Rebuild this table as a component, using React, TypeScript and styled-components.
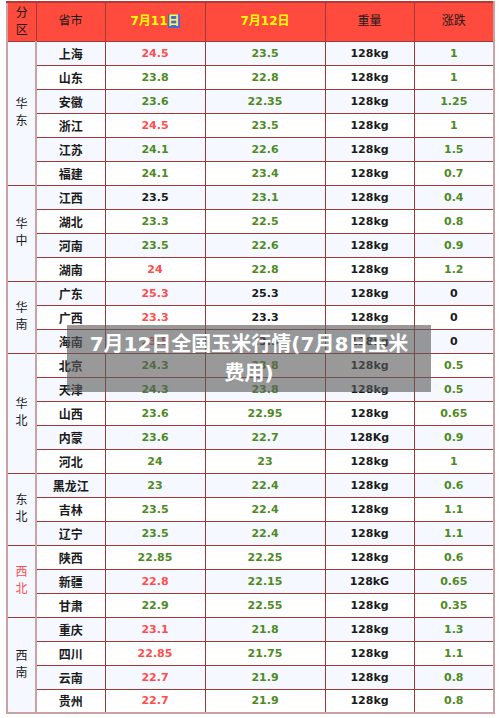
import styled, { createGlobalStyle } from 'styled-components'

const GlobalStyle = createGlobalStyle`
  body {
    margin: 0;
    background: #ffffff;
    font-family: "DejaVu Sans", "Noto Sans CJK SC", sans-serif;
  }
`

const Page = styled.div`
  position: relative;
  padding: 1px 7px 0 6px;
`

const Table = styled.table`
  width: 487px;
  table-layout: fixed;
  border-collapse: collapse;
  border: 2px solid #c9a3a3;
  border-top: 2px solid #b23a33;
  font-size: 11px;
`

const HeadRow = styled.tr`
  height: 39px;
  background: #ff4b3e;
`

const HeadCell = styled.th<{ $yellow?: boolean }>`
  padding: 0;
  border: 1px solid #9c3a36;
  font-size: 12px;
  font-weight: ${p => (p.$yellow ? 700 : 400)};
  color: ${p => (p.$yellow ? '#ffff00' : '#1a1a1a')};
  line-height: 17px;
  text-align: center;
`

const Picked = styled.span`
  background: #4b63e6;
  color: #ffff30;
`

const Row = styled.tr<{ $tint: boolean }>`
  height: 24px;
  background: ${p => (p.$tint ? '#f5f9ff' : '#ffffff')};
`

const RegionCell = styled.td<{ $red?: boolean }>`
  padding: 0;
  background: #f5f9ff;
  border: 1px solid #9c3a36;
  border-right: 2px solid #c9a3a3;
  color: ${p => (p.$red ? '#ff4d4d' : '#1a1a1a')};
  font-size: 12px;
  line-height: 17px;
  text-align: center;
`

const Cell = styled.td<{ $tone?: 'red' | 'green' | 'black' }>`
  padding: 0;
  border: 1px solid #9c3a36;
  text-align: center;
  font-weight: 700;
  color: ${p => (p.$tone === 'red' ? '#ff4d4d' : p.$tone === 'green' ? '#4e8a1e' : '#1a1a1a')};
`

const Province = styled(Cell)`
  font-size: 12px;
  font-weight: 700;
  color: #1a1a1a;
`

const Overlay = styled.div`
  position: absolute;
  left: 67px;
  top: 325px;
  width: 364px;
  height: 67px;
  padding: 0 16px;
  box-sizing: border-box;
  display: flex;
  align-items: center;
  justify-content: center;
  background: rgba(90, 90, 90, 0.62);
  color: #ffffff;
  font-size: 20px;
  font-weight: 700;
  line-height: 29px;
  text-align: center;
`

type Tone = 'red' | 'green' | 'black'
type Item = [string, string, Tone, string, Tone, string, string, Tone?]

const regions: { name: string; red?: boolean; rows: Item[] }[] = [
  {
    name: '华东',
    rows: [
      ['上海', '24.5', 'red', '23.5', 'green', '128kg', '1'],
      ['山东', '23.8', 'green', '22.8', 'green', '128kg', '1'],
      ['安徽', '23.6', 'green', '22.35', 'green', '128kg', '1.25'],
      ['浙江', '24.5', 'red', '23.5', 'green', '128kg', '1'],
      ['江苏', '24.1', 'green', '22.6', 'green', '128kg', '1.5'],
      ['福建', '24.1', 'green', '23.4', 'green', '128kg', '0.7'],
    ],
  },
  {
    name: '华中',
    rows: [
      ['江西', '23.5', 'black', '23.1', 'green', '128kg', '0.4'],
      ['湖北', '23.3', 'green', '22.5', 'green', '128kg', '0.8'],
      ['河南', '23.5', 'green', '22.6', 'green', '128kg', '0.9'],
      ['湖南', '24', 'red', '22.8', 'green', '128kg', '1.2'],
    ],
  },
  {
    name: '华南',
    rows: [
      ['广东', '25.3', 'red', '25.3', 'black', '128kg', '0', 'black'],
      ['广西', '23.3', 'red', '23.3', 'black', '128kg', '0', 'black'],
      ['海南', '23.5', 'red', '23.5', 'black', '128kg', '0', 'black'],
    ],
  },
  {
    name: '华北',
    rows: [
      ['北京', '24.3', 'green', '23.8', 'green', '128kg', '0.5'],
      ['天津', '24.3', 'green', '23.8', 'green', '128kg', '0.5'],
      ['山西', '23.6', 'green', '22.95', 'green', '128kg', '0.65'],
      ['内蒙', '23.6', 'green', '22.7', 'green', '128Kg', '0.9'],
      ['河北', '24', 'green', '23', 'green', '128kg', '1'],
    ],
  },
  {
    name: '东北',
    rows: [
      ['黑龙江', '23', 'green', '22.4', 'green', '128kg', '0.6'],
      ['吉林', '23.5', 'green', '22.4', 'green', '128kg', '1.1'],
      ['辽宁', '23.5', 'green', '22.4', 'green', '128kg', '1.1'],
    ],
  },
  {
    name: '西北',
    red: true,
    rows: [
      ['陕西', '22.85', 'green', '22.25', 'green', '128kg', '0.6'],
      ['新疆', '22.8', 'red', '22.15', 'green', '128kG', '0.65'],
      ['甘肃', '22.9', 'green', '22.55', 'green', '128kg', '0.35'],
    ],
  },
  {
    name: '西南',
    rows: [
      ['重庆', '23.1', 'red', '21.8', 'green', '128kg', '1.3'],
      ['四川', '22.85', 'red', '21.75', 'green', '128kg', '1.1'],
      ['云南', '22.7', 'red', '21.9', 'green', '128kg', '0.8'],
      ['贵州', '22.7', 'red', '21.9', 'green', '128kg', '0.8'],
    ],
  },
]

export default function App() {
  let index = 0
  return (
    <Page>
      <GlobalStyle />
      <Table>
        <colgroup>
          <col style={{ width: 29 }} />
          <col style={{ width: 69 }} />
          <col style={{ width: 100 }} />
          <col style={{ width: 120 }} />
          <col style={{ width: 89 }} />
          <col style={{ width: 80 }} />
        </colgroup>
        <thead>
          <HeadRow>
            <HeadCell>分<br />区</HeadCell>
            <HeadCell>省市</HeadCell>
            <HeadCell $yellow>7月11<Picked>日</Picked></HeadCell>
            <HeadCell $yellow>7月12日</HeadCell>
            <HeadCell>重量</HeadCell>
            <HeadCell>涨跌</HeadCell>
          </HeadRow>
        </thead>
        <tbody>
          {regions.map(region =>
            region.rows.map((r, i) => {
              const tint = index % 2 === 0
              index++
              return (
                <Row key={r[0]} $tint={tint}>
                  {i === 0 && (
                    <RegionCell rowSpan={region.rows.length} $red={region.red}>
                      {region.name[0]}<br />{region.name[1]}
                    </RegionCell>
                  )}
                  <Province>{r[0]}</Province>
                  <Cell $tone={r[2]}>{r[1]}</Cell>
                  <Cell $tone={r[4]}>{r[3]}</Cell>
                  <Cell $tone="black">{r[5]}</Cell>
                  <Cell $tone={r[7] ?? 'green'}>{r[6]}</Cell>
                </Row>
              )
            })
          )}
        </tbody>
      </Table>
      <Overlay>7月12日全国玉米行情(7月8日玉米费用)</Overlay>
    </Page>
  )
}
